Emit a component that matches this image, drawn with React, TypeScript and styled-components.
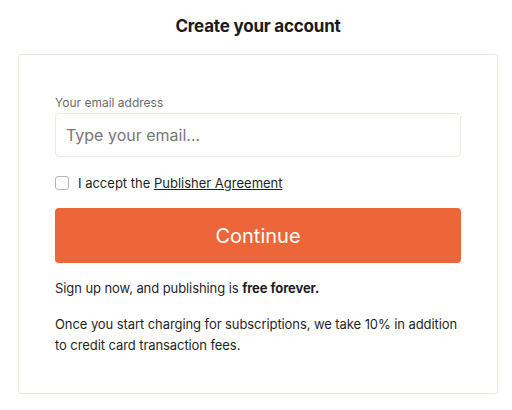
import styled, { createGlobalStyle } from "styled-components";

const GlobalStyle = createGlobalStyle`
  html, body {
    margin: 0;
    padding: 0;
    background: #ffffff;
    font-family: Inter, "Noto Sans", sans-serif;
    color: #1f1f1f;
  }
`;

const Page = styled.div`
  width: 512px;
  padding: 16px 14px 0 18px;
  box-sizing: border-box;
`;

const Title = styled.h1`
  margin: 0 0 17px 0;
  text-align: center;
  font-size: 17px;
  font-weight: 700;
  line-height: 21px;
  letter-spacing: -0.2px;
  color: #1a1a1a;
`;

const Card = styled.div`
  border: 1px solid #f7e6de;
  border-radius: 3px;
  padding: 40px 36px 37px 36px;
  display: flex;
  flex-direction: column;
`;

const Label = styled.label`
  font-size: 12px;
  line-height: 15px;
  color: #6b6b6b;
  margin-bottom: 3px;
`;

const EmailInput = styled.input`
  height: 44px;
  box-sizing: border-box;
  border: 1px solid #f7e6de;
  border-radius: 4px;
  padding: 0 10px;
  font-family: inherit;
  font-size: 16px;
  color: #1f1f1f;
  outline: none;

  &::placeholder {
    color: #777777;
  }
`;

const CheckRow = styled.label`
  display: flex;
  align-items: center;
  gap: 9px;
  margin-top: 18px;
  font-size: 13px;
  line-height: 16px;
  color: #1f1f1f;
`;

const Box = styled.input`
  appearance: none;
  margin: 0;
  width: 14px;
  height: 14px;
  border: 1px solid #b5b5b5;
  border-radius: 3px;
  background: #fff;
`;

const AgreementLink = styled.a`
  color: #1f1f1f;
  text-decoration: underline;
`;

const ContinueButton = styled.button`
  margin-top: 17px;
  height: 55px;
  border: none;
  border-radius: 4px;
  background: #ec6639;
  color: #ffffff;
  font-family: inherit;
  font-size: 20px;
  font-weight: 400;
`;

const Note = styled.p`
  margin: 15px 0 0 0;
  font-size: 13px;
  letter-spacing: -0.08px;
  line-height: 21px;
  color: #1f1f1f;
`;

export default function App() {
  return (
    <Page>
      <GlobalStyle />
      <Title>Create your account</Title>
      <Card>
        <Label htmlFor="email">Your email address</Label>
        <EmailInput id="email" type="email" placeholder="Type your email..." />
        <CheckRow>
          <Box type="checkbox" />
          <span>
            I accept the <AgreementLink href="#">Publisher Agreement</AgreementLink>
          </span>
        </CheckRow>
        <ContinueButton>Continue</ContinueButton>
        <Note>
          Sign up now, and publishing is <strong>free forever.</strong>
        </Note>
        <Note>
          Once you start charging for subscriptions, we take 10% in addition to credit card transaction fees.
        </Note>
      </Card>
    </Page>
  );
}
